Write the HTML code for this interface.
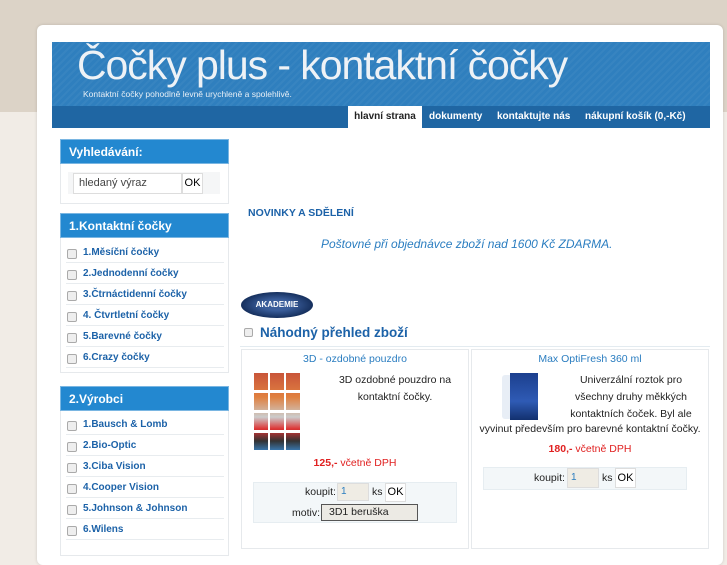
<!DOCTYPE html>
<html><head><meta charset="utf-8"><style>
*{margin:0;padding:0;box-sizing:border-box}
body{width:727px;height:545px;overflow:hidden;background:#f1ece6;font-family:"Liberation Sans",sans-serif;position:relative}
.a{position:absolute}
.topbg{left:0;top:0;width:727px;height:112px;background:#dcd3c7}
.card{left:37px;top:25px;width:686px;height:540px;background:#fff;border-radius:6px;box-shadow:0 0 3px rgba(0,0,0,.15)}
.hdr{left:52px;top:42px;width:658px;height:86px;background:#2f7fbe;background-image:repeating-linear-gradient(135deg,rgba(255,255,255,.04) 0 2px,transparent 2px 5px)}
.nav{left:52px;top:106px;width:658px;height:22px;background:#1f66a3}
.title{left:77px;top:42px;font-size:41px;color:#eef2f6;letter-spacing:-1.05px}
.sub{left:83px;top:89px;font-size:8.5px;color:#e6eef5}
.nv{top:106px;height:22px;line-height:21px;font-size:10px;font-weight:bold;color:#fff}
.bhd{background:#2388d0;color:#fff;font-weight:bold;font-size:12px;padding-left:8px;line-height:24px;height:25px;border:1px solid #7ab6e2}
.box{border:1px solid #e6e9ec}
.li{position:absolute;left:66px;height:21px;width:158px;border-bottom:1px solid #e8ecef;font-size:10px;font-weight:bold;color:#1c62a8;line-height:21px;padding-left:17px}
.li:before{content:"";position:absolute;left:1px;top:7px;width:8px;height:8px;border:1px solid #aaa;border-radius:2px;background:#eee}
.blue{color:#1c62a8}
.inp{border:1px solid #ddd;background:#fff;font-size:11px}
</style></head><body>
<div class="a topbg"></div>
<div class="a card"></div>
<div class="a hdr"></div>
<div class="a nav"></div>
<div class="a title">Čočky plus - kontaktní čočky</div>
<div class="a sub">Kontaktní čočky pohodlně levně urychleně a spolehlivě.</div>
<div class="a nv" style="left:348px;width:74px;background:#fff;color:#222;text-align:center">hlavní strana</div>
<div class="a nv" style="left:429px">dokumenty</div>
<div class="a nv" style="left:497px">kontaktujte nás</div>
<div class="a nv" style="left:585px">nákupní košík (0,-Kč)</div>

<div class="a box" style="left:60px;top:139px;width:169px;height:65px"></div>
<div class="a bhd" style="left:60px;top:139px;width:169px">Vyhledávání:</div>
<div class="a" style="left:68px;top:172px;width:152px;height:22px;background:#f5f6f7"></div>
<div class="a inp" style="left:73px;top:173px;width:109px;height:21px;padding-left:5px;line-height:19px;color:#444">hledaný výraz</div>
<div class="a inp" style="left:182px;top:173px;width:21px;height:21px;line-height:19px;text-align:center">OK</div>

<div class="a box" style="left:60px;top:213px;width:169px;height:160px"></div>
<div class="a bhd" style="left:60px;top:213px;width:169px">1.Kontaktní čočky</div>
<div class="li" style="top:242px">1.Měsíční čočky</div>
<div class="li" style="top:263px">2.Jednodenní čočky</div>
<div class="li" style="top:284px">3.Čtrnáctidenní čočky</div>
<div class="li" style="top:305px">4. Čtvrtletní čočky</div>
<div class="li" style="top:326px">5.Barevné čočky</div>
<div class="li" style="top:347px">6.Crazy čočky</div>

<div class="a box" style="left:60px;top:386px;width:169px;height:170px"></div>
<div class="a bhd" style="left:60px;top:386px;width:169px">2.Výrobci</div>
<div class="li" style="top:414px">1.Bausch &amp; Lomb</div>
<div class="li" style="top:435px">2.Bio-Optic</div>
<div class="li" style="top:456px">3.Ciba Vision</div>
<div class="li" style="top:477px">4.Cooper Vision</div>
<div class="li" style="top:498px">5.Johnson &amp; Johnson</div>
<div class="li" style="top:519px">6.Wilens</div>

<div class="a blue" style="left:248px;top:207px;font-size:10.5px;font-weight:bold">NOVINKY A SDĚLENÍ</div>
<div class="a" style="left:321px;top:237px;font-size:12px;font-style:italic;color:#2a7dc0">Poštovné při objednávce zboží nad 1600 Kč ZDARMA.</div>
<div class="a" style="left:241px;top:292px;width:72px;height:26px;border-radius:50%;background:radial-gradient(ellipse,#3a5d9a 30%,#16305e 70%);color:#fff;font-size:8px;text-align:center;line-height:26px;font-weight:bold">AKADEMIE</div>
<div class="a" style="left:244px;top:328px;width:9px;height:9px;border:1px solid #aaa;border-radius:2px;background:#eee"></div>
<div class="a blue" style="left:260px;top:325px;font-size:13.5px;font-weight:bold">Náhodný přehled zboží</div>
<div class="a" style="left:240px;top:346px;width:470px;height:1px;background:#e3ebf0"></div>

<div class="a box" style="left:241px;top:349px;width:228px;height:200px"></div>
<div class="a" style="left:241px;top:353px;width:228px;text-align:center;font-size:10.5px;color:#2a7dc0">3D - ozdobné pouzdro</div>
<div class="a" style="left:252px;top:373px;width:48px;height:80px;background:repeating-linear-gradient(90deg,#fff 0,#fff 2px,transparent 2px 16px),repeating-linear-gradient(0deg,#fff 0 3px,transparent 3px 20px),linear-gradient(#c8553a,#e08040 30%,#ccc 55%,#d33 70%,#333 85%,#3a8ad0)"></div>
<div class="a" style="left:330px;top:372px;width:130px;text-align:center;font-size:10.5px;line-height:17px;color:#222">3D ozdobné pouzdro na kontaktní čočky.</div>
<div class="a" style="left:241px;top:457px;width:228px;text-align:center;font-size:10.5px;color:#e02020"><b>125,-</b> včetně DPH</div>
<div class="a" style="left:253px;top:482px;width:204px;height:41px;background:#f3f7f9;border:1px solid #e6edf1"></div>
<div class="a" style="left:305px;top:486px;font-size:10.5px;color:#222">koupit:</div>
<div class="a" style="left:337px;top:483px;width:32px;height:18px;background:#efece4;border:1px solid #ddd;font-size:10px;color:#2a7dc0;padding:2px 3px">1</div>
<div class="a" style="left:372px;top:486px;font-size:10.5px;color:#222">ks</div>
<div class="a inp" style="left:385px;top:483px;width:21px;height:19px;text-align:center;line-height:17px">OK</div>
<div class="a" style="left:292px;top:507px;font-size:10.5px;color:#222">motiv:</div>
<div class="a" style="left:321px;top:504px;width:97px;height:17px;background:#eceae4;border:1px solid #555;font-size:10.5px;padding:1px 7px;color:#222">3D1 beruška</div>

<div class="a box" style="left:471px;top:349px;width:238px;height:200px"></div>
<div class="a" style="left:471px;top:353px;width:238px;text-align:center;font-size:10.5px;color:#2a7dc0">Max OptiFresh 360 ml</div>
<div class="a" style="left:502px;top:375px;width:10px;height:44px;background:#e8eef6;border-radius:3px"></div>
<div class="a" style="left:510px;top:373px;width:28px;height:47px;background:linear-gradient(#1c3f8e,#2f5bb5 60%,#12306e)"></div>
<div class="a" style="left:561px;top:372px;width:140px;text-align:center;font-size:10.5px;line-height:17px;color:#222">Univerzální roztok pro všechny druhy měkkých kontaktních čoček. Byl ale</div>
<div class="a" style="left:471px;top:423px;width:238px;text-align:center;font-size:10.5px;color:#222">vyvinut především pro barevné kontaktní čočky.</div>
<div class="a" style="left:471px;top:443px;width:238px;text-align:center;font-size:10.5px;color:#e02020"><b>180,-</b> včetně DPH</div>
<div class="a" style="left:483px;top:467px;width:204px;height:23px;background:#f3f7f9;border:1px solid #e6edf1"></div>
<div class="a" style="left:534px;top:472px;font-size:10.5px;color:#222">koupit:</div>
<div class="a" style="left:567px;top:468px;width:32px;height:20px;background:#efece4;border:1px solid #ddd;font-size:10px;color:#2a7dc0;padding:3px 3px">1</div>
<div class="a" style="left:602px;top:472px;font-size:10.5px;color:#222">ks</div>
<div class="a inp" style="left:615px;top:468px;width:21px;height:20px;text-align:center;line-height:18px">OK</div>
</body></html>
